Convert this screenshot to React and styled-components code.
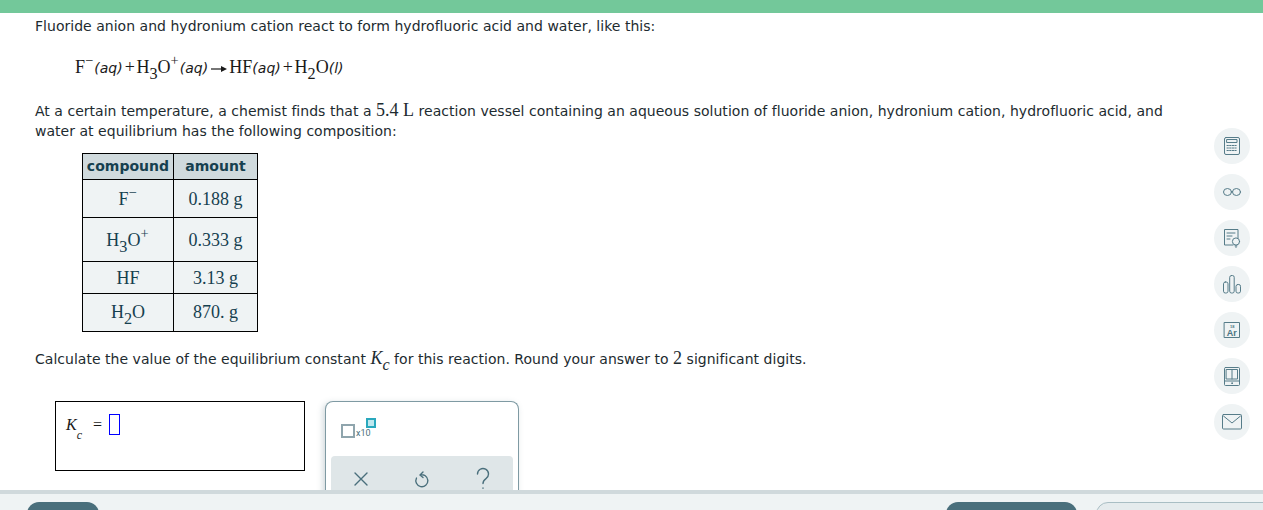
import React from "react";
import styled, { createGlobalStyle } from "styled-components";

const Global = createGlobalStyle`
  html, body { margin: 0; padding: 0; background: #fff; overflow: hidden; }
  body { font-family: "DejaVu Sans", Verdana, sans-serif; font-size: 14px; letter-spacing: 0.025px; color: #1d2b30; }
`;

const Page = styled.div`
  height: 510px;
  display: flex;
  flex-direction: column;
  overflow: hidden;
`;

const TopBar = styled.div`
  height: 13px;
  flex: none;
  background: #73c89a;
`;

const Main = styled.div`
  flex: 1;
  min-height: 0;
  display: flex;
  overflow: hidden;
`;

const Question = styled.div`
  flex: 1;
  min-width: 0;
  padding: 3px 45px 0 35px;
`;

const Line = styled.p`
  margin: 0;
  line-height: 20px;
`;

const Block = styled(Line)`
  margin-top: ${(p) => p.$top}px;
`;

const Equation = styled.div`
  margin: 16px 0 0 40px;
  height: 30px;
  line-height: 30px;
  font-family: "Liberation Serif", serif;
  font-size: 18px;
  color: #1a1a1a;
  white-space: nowrap;
`;

const Phase = styled.i`
  font-family: "DejaVu Sans", sans-serif;
  font-size: 14px;
  margin-right: 1px;
`;

const Plus = styled.span`
  margin: 0 1.5px 0 1px;
`;

const SerifNum = styled.span`
  font-family: "Liberation Serif", serif;
  font-size: 18px;
`;

const Sub = styled.sub`
  font-size: 0.9em;
  line-height: 0;
  vertical-align: -0.4em;
`;

const Sup = styled.sup`
  font-size: 0.8em;
  line-height: 0;
  vertical-align: 0.55em;
  margin-right: 1px;
`;

const Arrow = styled.svg`
  width: 16px;
  height: 8px;
  margin: 0 2px;
  vertical-align: 0;
`;

const Table = styled.table`
  margin: 12px 0 0 47px;
  border-collapse: collapse;
  table-layout: fixed;
  width: 174px;
  background: #eff3f4;
  color: #16404f;
`;

const Head = styled.th`
  height: 25px;
  padding: 0;
  border: 1px solid #000;
  background: #d0dadd;
  font-size: 14px;
  font-weight: 700;
  line-height: 25px;
  width: ${(p) => p.$w}px;
`;

const Cell = styled.td`
  height: ${(p) => p.$h}px;
  padding: ${(p) => p.$pad ?? 2}px 0 0;
  border: 1px solid #000;
  text-align: center;
  font-family: "Liberation Serif", serif;
  font-size: 18px;
`;

const AnswerRow = styled.div`
  display: flex;
  align-items: flex-start;
  gap: 20px;
  margin: 32px 0 0 20px;
`;

const AnswerBox = styled.div`
  box-sizing: border-box;
  width: 250px;
  height: 70px;
  border: 1px solid #000;
  padding: 12px 0 0 10px;
  display: flex;
  align-items: flex-start;
  font-family: "Liberation Serif", serif;
  font-size: 16px;
  color: #1a1a1a;
`;

const KLabel = styled.i`
  line-height: 22px;
  width: 27px;
  flex: none;
`;

const KSub = styled.sub`
  font-size: 12px;
  line-height: 0;
  vertical-align: -9px;
`;

const Equals = styled.span`
  line-height: 22px;
  width: 16px;
  flex: none;
`;

const Cursor = styled.div`
  box-sizing: border-box;
  width: 11px;
  height: 21px;
  border: 1px solid #0000ff;
`;

const Panel = styled.div`
  box-sizing: border-box;
  width: 194px;
  height: 110px;
  padding: 0 5px;
  border: 1px solid #7f9aa3;
  border-bottom: none;
  border-radius: 8px 8px 0 0;
  box-shadow: -2px 2px 6px rgba(100, 125, 135, 0.3);
  background: #fff;
`;

const Exponent = styled.div`
  height: 54px;
  padding: 16px 0 18px 10px;
  box-sizing: border-box;
  display: flex;
  align-items: flex-end;
`;

const Tile = styled.div`
  box-sizing: border-box;
  flex: none;
  width: ${(p) => (p.$small ? 10 : 14)}px;
  height: ${(p) => (p.$small ? 10 : 14)}px;
  border: 2px solid ${(p) => (p.$small ? "#2aa8bd" : "#8fa5ad")};
  background: ${(p) => (p.$small ? "#bfe8ef" : "#fff")};
`;

const Times = styled.span`
  font-family: Roboto, sans-serif;
  font-size: 9px;
  line-height: 9px;
  color: #4a6f7c;
  margin-left: 1px;
`;

const TileUp = styled(Tile)`
  align-self: flex-start;
  margin-left: -5px;
`;

const Actions = styled.div`
  display: flex;
  justify-content: space-around;
  align-items: center;
  height: 46px;
  background: #dfe6e8;
  border-radius: 4px 4px 0 0;
`;

const ActionIcon = styled.svg`
  width: 20px;
  height: 24px;
  fill: none;
  stroke: #4a6f7c;
  stroke-width: 1.4;
  stroke-linecap: round;
  stroke-linejoin: round;
`;

const Side = styled.div`
  flex: none;
  width: 36px;
  padding: 115px 13px 0 0;
  display: flex;
  flex-direction: column;
  gap: 10px;
`;

const Round = styled.div`
  flex: none;
  width: 36px;
  height: 36px;
  border-radius: 50%;
  background: #eff3f4;
  display: flex;
  align-items: center;
  justify-content: center;
`;

const Glyph = styled.svg`
  width: 24px;
  height: 24px;
  fill: none;
  stroke: #567c89;
  stroke-width: 1;
  stroke-linejoin: round;
  stroke-linecap: round;
`;

const GlyphText = styled.text`
  font-family: "Liberation Sans", sans-serif;
  font-weight: 700;
  fill: #4a7482;
  stroke: none;
`;

const Footer = styled.div`
  box-sizing: border-box;
  height: 20px;
  flex: none;
  border-top: 4px solid #d0d9dc;
  background: #eff3f4;
  display: flex;
  padding: 8px 0 0 27px;
  overflow: hidden;
`;

const Btn = styled.div`
  box-sizing: border-box;
  flex: none;
  width: ${(p) => p.$w}px;
  height: 40px;
  margin-left: ${(p) => p.$left}px;
  border-radius: 12px;
  background: ${(p) => (p.$ghost ? "#e5ebed" : "#4a6f7c")};
  border: ${(p) => (p.$ghost ? "1px solid #a9bec4" : "none")};
`;

const Tools = [
  <>
    <rect x="4.5" y="3.5" width="15" height="17" rx="1.5" />
    <rect x="7" y="5.5" width="10" height="3" />
    <path strokeDasharray="1.4 1.2" d="M7 11.5h10M7 14h10M7 16.5h10" />
  </>,
  <>
    <ellipse cx="7.5" cy="12" rx="4" ry="3.5" />
    <ellipse cx="16.5" cy="12" rx="4" ry="3.5" />
    <path d="M11.5 11.5c.3-.3.7-.3 1 0" />
  </>,
  <>
    <path d="M13 19H4.5V3.5H18V12" />
    <path d="M7 7h8M7 10h5M7 13h3" />
    <circle cx="16" cy="15.5" r="3.6" />
    <path d="M15 19.8h2M15.5 21h1" />
  </>,
  <>
    <rect x="3.5" y="10" width="4.5" height="11" rx="1.8" />
    <rect x="9.7" y="3.5" width="4.5" height="17.5" rx="1.8" />
    <rect x="16" y="12.5" width="4.5" height="8.5" rx="1.8" />
  </>,
  <>
    <rect x="4.5" y="4.5" width="15" height="15" />
    <GlyphText x="10" y="9.6" fontSize="4">18</GlyphText>
    <GlyphText x="6.8" y="17.5" fontSize="9">Ar</GlyphText>
  </>,
  <>
    <rect x="4.5" y="3.5" width="15" height="18" rx="1" />
    <path d="M6.5 5.5h11V15h-11zM12 6V15M4.5 17h15" />
    <circle cx="12" cy="19.2" r=".5" />
  </>,
  <>
    <rect x="2.5" y="4.5" width="19" height="14.5" rx="1" />
    <path d="M3.5 6l8.5 7 8.5-7" />
  </>,
];

export default function App() {
  return (
    <Page>
      <Global />
      <TopBar />
      <Main>
        <Question>
          <Line>Fluoride anion and hydronium cation react to form hydrofluoric acid and water, like this:</Line>
          <Equation>
            F<Sup>−</Sup><Phase>(aq)</Phase><Plus>+</Plus>H<Sub>3</Sub>O<Sup>+</Sup><Phase>(aq)</Phase>
            <Arrow viewBox="0 0 16 8">
              <path d="M0 4h12" stroke="#1a1a1a" strokeWidth="1.2" />
              <path d="M10 1l6 3-6 3z" fill="#1a1a1a" />
            </Arrow>
            HF<Phase>(aq)</Phase><Plus>+</Plus>H<Sub>2</Sub>O<Phase>(l)</Phase>
          </Equation>
          <Block $top={18}>
            At a certain temperature, a chemist finds that a <SerifNum>5.4</SerifNum> <SerifNum>L</SerifNum> reaction vessel containing an aqueous solution of fluoride anion, hydronium cation, hydrofluoric acid, and water at equilibrium has the following composition:
          </Block>
          <Table>
            <thead>
              <tr>
                <Head $w={90}>compound</Head>
                <Head $w={83}>amount</Head>
              </tr>
            </thead>
            <tbody>
              <tr>
                <Cell $h={35}>F<Sup>−</Sup></Cell>
                <Cell>0.188 g</Cell>
              </tr>
              <tr>
                <Cell $h={41}>H<Sub>3</Sub>O<Sup>+</Sup></Cell>
                <Cell>0.333 g</Cell>
              </tr>
              <tr>
                <Cell $h={29}>HF</Cell>
                <Cell>3.13 g</Cell>
              </tr>
              <tr>
                <Cell $h={37} $pad={0}>H<Sub>2</Sub>O</Cell>
                <Cell $pad={0}>870. g</Cell>
              </tr>
            </tbody>
          </Table>
          <Block $top={16}>
            Calculate the value of the equilibrium constant <SerifNum><i>K</i><Sub><i>c</i></Sub></SerifNum> for this reaction. Round your answer to <SerifNum>2</SerifNum> significant digits.
          </Block>
          <AnswerRow>
            <AnswerBox>
              <KLabel>K<KSub>c</KSub></KLabel>
              <Equals>=</Equals>
              <Cursor />
            </AnswerBox>
            <Panel>
              <Exponent>
                <Tile />
                <Times>x10</Times>
                <TileUp $small />
              </Exponent>
              <Actions>
                <ActionIcon viewBox="0 0 20 24"><path d="M4 6l12 12M16 6L4 18" /></ActionIcon>
                <ActionIcon viewBox="0 0 20 24"><path d="M8 8a6 6 0 1 1-3.5 3M8 8l3-3M8 8l3 2.5" /></ActionIcon>
                <ActionIcon viewBox="0 0 20 24"><path d="M4.5 7a5.5 5.5 0 1 1 8.5 4.6c-2 1.3-3 2.4-3 5M10 21v.2" /></ActionIcon>
              </Actions>
            </Panel>
          </AnswerRow>
        </Question>
        <Side>
          {Tools.map((t, i) => (
            <Round key={i}>
              <Glyph viewBox="0 0 24 24">{t}</Glyph>
            </Round>
          ))}
        </Side>
      </Main>
      <Footer>
        <Btn $w={72} $left={0} />
        <Btn $w={131} $left={847} />
        <Btn $w={200} $left={19} $ghost />
      </Footer>
    </Page>
  );
}
